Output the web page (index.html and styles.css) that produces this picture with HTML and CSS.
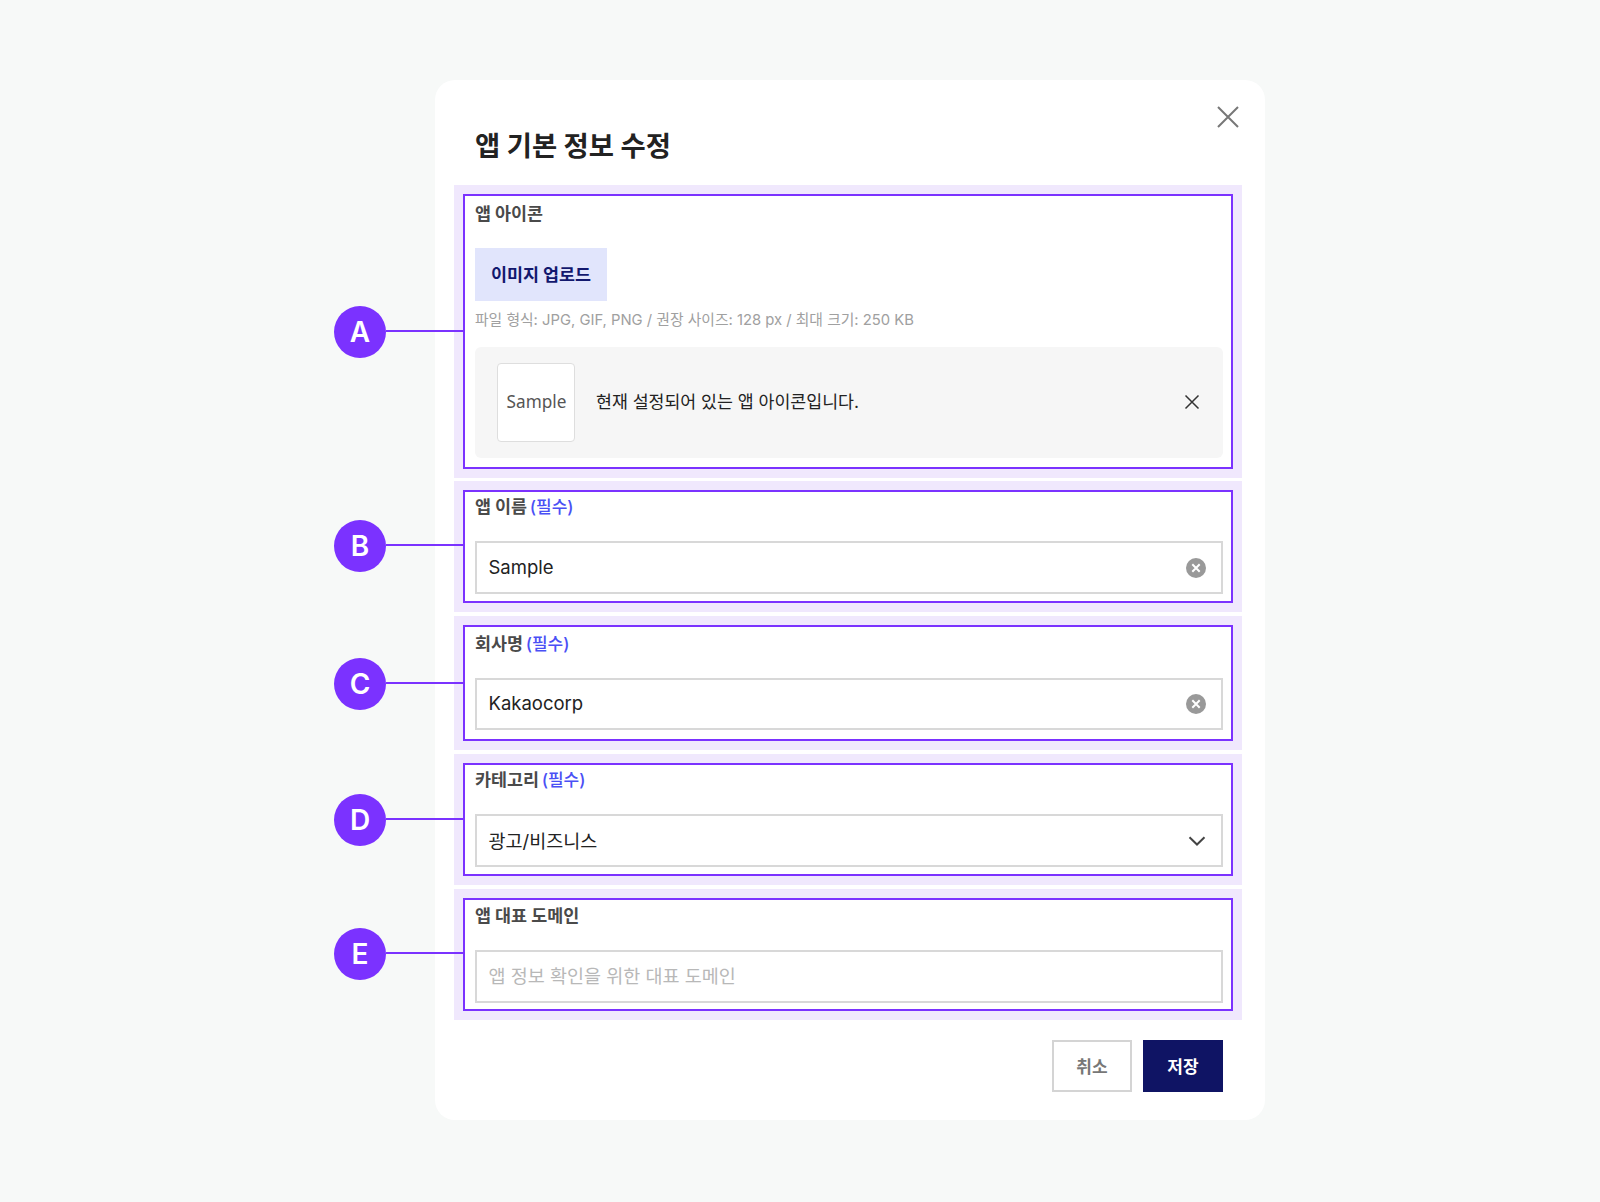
FILE: index.html
```html
<!DOCTYPE html>
<html lang="ko">
<head>
    <meta charset="UTF-8">
    <title>앱 기본 정보 수정</title>
    <link rel="stylesheet" href="styles.css">
</head>

<body>
    <div class="modal">
        <svg class="modal-close" viewBox="0 0 24 24">
            <path d="M2 2 L22 22 M22 2 L2 22" />
        </svg>

        <h1 class="modal-title">앱 기본 정보 수정</h1>

        <div class="field-list">
            <section class="field field-first">
                <div class="callout callout-a"><span class="callout-badge">A</span><span class="callout-line"></span></div>
                <div class="field-frame field-a">
                    <div class="field-label">앱 아이콘</div>
                    <div class="upload-btn">이미지 업로드</div>
                    <p class="upload-hint">파일 형식: JPG, GIF, PNG / 권장 사이즈: 128 px / 최대 크기: 250 KB</p>
                    <div class="icon-panel">
                        <div class="icon-thumb">Sample</div>
                        <span class="icon-text">현재 설정되어 있는 앱 아이콘입니다.</span>
                        <svg class="icon-remove" viewBox="0 0 16 16">
                            <path d="M1.5 1.5 L14.5 14.5 M14.5 1.5 L1.5 14.5" />
                        </svg>
                    </div>
                </div>
            </section>

            <section class="field">
                <div class="callout callout-b"><span class="callout-badge">B</span><span class="callout-line"></span></div>
                <div class="field-frame field-b">
                    <div class="field-label">앱 이름 <span class="required">(필수)</span></div>
                    <div class="input-box">
                        <span class="input-value">Sample</span>
                        <svg class="input-clear" viewBox="0 0 20 20">
                            <circle cx="10" cy="10" r="10" />
                            <path d="M6.3 6.3 L13.7 13.7 M13.7 6.3 L6.3 13.7" />
                        </svg>
                    </div>
                </div>
            </section>

            <section class="field">
                <div class="callout callout-c"><span class="callout-badge">C</span><span class="callout-line"></span></div>
                <div class="field-frame field-c">
                    <div class="field-label">회사명 <span class="required">(필수)</span></div>
                    <div class="input-box">
                        <span class="input-value">Kakaocorp</span>
                        <svg class="input-clear" viewBox="0 0 20 20">
                            <circle cx="10" cy="10" r="10" />
                            <path d="M6.3 6.3 L13.7 13.7 M13.7 6.3 L6.3 13.7" />
                        </svg>
                    </div>
                </div>
            </section>

            <section class="field">
                <div class="callout callout-d"><span class="callout-badge">D</span><span class="callout-line"></span></div>
                <div class="field-frame field-d">
                    <div class="field-label">카테고리 <span class="required">(필수)</span></div>
                    <div class="input-box">
                        <span class="input-value">광고/비즈니스</span>
                        <svg class="input-chevron" viewBox="0 0 18 10">
                            <path d="M1.5 1.2 L9 8.5 L16.5 1.2" />
                        </svg>
                    </div>
                </div>
            </section>

            <section class="field">
                <div class="callout callout-e"><span class="callout-badge">E</span><span class="callout-line"></span></div>
                <div class="field-frame field-e">
                    <div class="field-label">앱 대표 도메인</div>
                    <div class="input-box">
                        <span class="input-placeholder">앱 정보 확인을 위한 대표 도메인</span>
                    </div>
                </div>
            </section>
        </div>

        <div class="modal-actions">
            <div class="btn btn-cancel">취소</div>
            <div class="btn btn-save">저장</div>
        </div>
    </div>
</body>
</html>
```

FILE: styles.css
```css
body {
    margin: 0;
    min-height: 1202px;
    background-color: #f7f9f8;
    font-family: Inter, "Noto Sans CJK KR", sans-serif;
    color: #222;
}

.modal {
    position: relative;
    box-sizing: border-box;
    width: 830px;
    height: 1040px;
    margin: 0 0 0 435px;
    top: 80px;
    padding: 0 23px 0 19px;
    background-color: #fff;
    border-radius: 20px;
}

.modal-close {
    position: absolute;
    top: 25px;
    right: 25px;
    width: 24px;
    height: 24px;
    fill: none;
    stroke: #777;
    stroke-width: 2;
}

.modal-title {
    margin: 0;
    padding: 47px 0 0 21px;
    height: 58px;
    font-size: 27.4px;
    line-height: 38px;
    font-weight: 700;
    color: #222;
}

.field-list {
    display: flex;
    flex-direction: column;
    gap: 4px;
}

.field {
    position: relative;
    padding: 9px;
    background-color: #f0e8fd;
}

.field-first {
    margin-bottom: -1px;
}

.field-frame {
    padding: 3px 8px 7px 10px;
    border: 2px solid #7b32ff;
    background-color: #fff;
}

.field-a { padding-top: 6px; padding-bottom: 9px; }
.field-c { padding-top: 5px; padding-bottom: 9px; }
.field-e { padding-top: 4px; padding-bottom: 6px; }

.field-c .input-box { height: 52px; }

.field-label {
    font-size: 17.4px;
    line-height: 24px;
    font-weight: 700;
    color: #4a4a4a;
}

.required {
    margin-left: -1.5px;
    font-size: 17px;
    font-weight: 500;
    color: #4a50f5;
}

/* annotations sit outside the modal, on the left */
.callout {
    position: absolute;
    left: -120px;
    display: flex;
    align-items: center;
}

.callout-a { top: 121px; }
.callout-b { top: 39px; }
.callout-c { top: 42px; }
.callout-d { top: 40px; }
.callout-e { top: 39px; }

.callout-badge {
    display: flex;
    align-items: center;
    justify-content: center;
    width: 52px;
    height: 52px;
    border-radius: 50%;
    background-color: #7b32ff;
    color: #fff;
    font-size: 28px;
    font-weight: 600;
}

.callout-line {
    width: 77px;
    height: 2px;
    margin-top: -2px;
    background-color: #7b32ff;
}

.upload-btn {
    display: flex;
    align-items: center;
    justify-content: center;
    width: 132px;
    height: 53px;
    margin-top: 22px;
    padding-bottom: 2px;
    box-sizing: border-box;
    background-color: #e1e5fc;
    color: #12186e;
    font-size: 17.4px;
    font-weight: 700;
}

.upload-hint {
    margin: 9px 0 0;
    font-size: 14.8px;
    line-height: 20px;
    color: #a0a0a0;
}

.icon-panel {
    display: flex;
    align-items: center;
    height: 111px;
    margin-top: 17px;
    padding: 0 22px;
    background-color: #f6f6f6;
    border-radius: 6px;
}

.icon-thumb {
    box-sizing: border-box;
    display: flex;
    align-items: center;
    justify-content: center;
    width: 78px;
    height: 79px;
    padding-bottom: 3px;
    padding-left: 1px;
    background-color: #fff;
    border: 1.5px solid #dedede;
    border-radius: 4px;
    font-family: "Noto Sans", sans-serif;
    font-size: 17.2px;
    color: #555;
}

.icon-text {
    margin-left: 21px;
    margin-bottom: 5px;
    font-size: 17.3px;
    color: #222;
}

.icon-remove {
    width: 16px;
    height: 16px;
    margin-left: auto;
    margin-right: 1px;
    margin-bottom: 1px;
    fill: none;
    stroke: #333;
    stroke-width: 1.5;
}

.input-box {
    box-sizing: border-box;
    display: flex;
    align-items: center;
    justify-content: space-between;
    height: 53px;
    margin-top: 22px;
    padding: 0 15.5px 0 12px;
    border: 2px solid #d8d8d8;
    font-size: 18.5px;
}

.input-value {
    margin-left: -0.5px;
    margin-bottom: 2px;
    color: #222;
}

.input-placeholder {
    margin-left: -0.5px;
    margin-bottom: 3px;
    color: #b8b8b8;
}

.input-clear {
    width: 20px;
    height: 20px;
}

.input-clear circle {
    fill: #999;
}

.input-clear path {
    fill: none;
    stroke: #fff;
    stroke-width: 2;
}

.input-chevron {
    width: 18px;
    height: 10px;
    margin-right: -0.5px;
    fill: none;
    stroke: #444;
    stroke-width: 2;
}

.modal-actions {
    display: flex;
    justify-content: flex-end;
    gap: 11px;
    margin-top: 20px;
    padding-right: 19px;
}

.btn {
    box-sizing: border-box;
    display: flex;
    align-items: center;
    justify-content: center;
    width: 80px;
    height: 52px;
    padding-bottom: 2px;
    font-size: 17px;
    font-weight: 700;
}

.btn-cancel {
    border: 2px solid #d4d4d4;
    color: #777;
}

.btn-save {
    background-color: #0f1464;
    color: #fff;
}
```
